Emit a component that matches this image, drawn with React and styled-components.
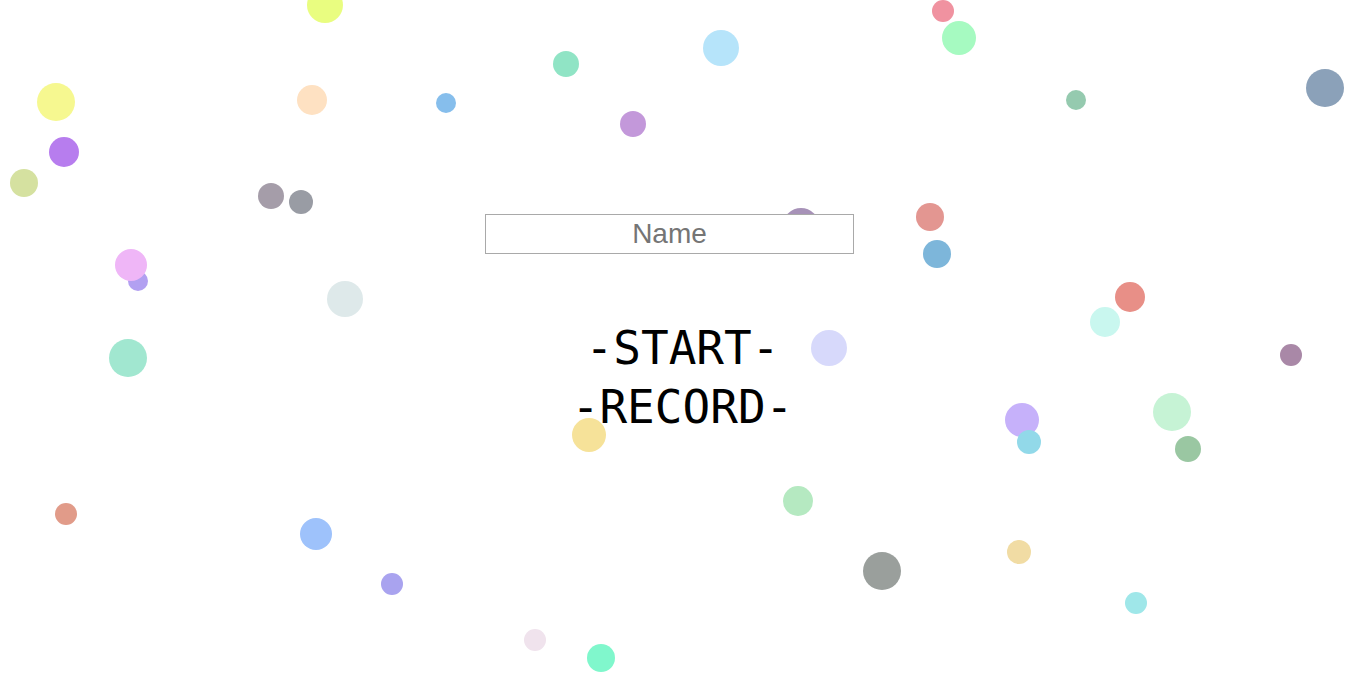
import React from "react";
import styled, { createGlobalStyle } from "styled-components";

const GlobalStyle = createGlobalStyle`
  html, body {
    margin: 0;
    padding: 0;
    background: #ffffff;
  }
`;

// [x, y, diameter, colour] -- centre coordinates
const bubbles = [
  [325, 5, 36, "#e9fd80"],
  [943, 11, 22, "#f092a0"],
  [959, 38, 34, "#a6fac1"],
  [721, 48, 36, "#b6e4fa"],
  [566, 64, 26, "#90e4c5"],
  [1325, 88, 38, "#8ba1b9"],
  [56, 102, 38, "#f6f890"],
  [312, 100, 30, "#fee1c2"],
  [446, 103, 20, "#86beec"],
  [1076, 100, 20, "#95caaf"],
  [633, 124, 26, "#c398da"],
  [64, 152, 30, "#b77dee"],
  [24, 183, 28, "#d5e1a0"],
  [271, 196, 26, "#a59da9"],
  [301, 202, 24, "#999ca4"],
  [801, 226, 36, "#a792b8"],
  [930, 217, 28, "#e39691"],
  [937, 254, 28, "#7db6da"],
  [138, 281, 20, "#b2a0f1"],
  [131, 265, 32, "#efb6f7"],
  [345, 299, 36, "#dee9ea"],
  [1105, 322, 30, "#c9f7ef"],
  [1130, 297, 30, "#e88f87"],
  [128, 358, 38, "#a1e7d0"],
  [829, 348, 36, "#d7d9fb"],
  [1291, 355, 22, "#a988a7"],
  [1022, 420, 34, "#c6b1fa"],
  [1029, 442, 24, "#92d9e9"],
  [1172, 412, 38, "#c6f3d5"],
  [1188, 449, 26, "#9ac7a2"],
  [589, 435, 34, "#f6e299"],
  [798, 501, 30, "#b5e9c1"],
  [66, 514, 22, "#e19b89"],
  [316, 534, 32, "#9ec2fb"],
  [882, 571, 38, "#9a9f9c"],
  [1019, 552, 24, "#f1dca4"],
  [392, 584, 22, "#a9a3ef"],
  [1136, 603, 22, "#9fe7e9"],
  [535, 640, 22, "#f0e3ed"],
  [601, 658, 28, "#80f7cc"],
];

const App = () => {
  return (
    <Page>
      <GlobalStyle />
      <Field>
        {bubbles.map(([x, y, d, c], i) => (
          <Bubble key={i} $x={x} $y={y} $d={d} $color={c} />
        ))}
      </Field>
      <Menu>
        <NameInput type="text" placeholder="Name" />
        <MenuList>
          <MenuItem>-START-</MenuItem>
          <MenuItem>-RECORD-</MenuItem>
        </MenuList>
      </Menu>
    </Page>
  );
};

export default App;

const Page = styled.div`
  position: relative;
  width: 100vw;
  height: 100vh;
  overflow: hidden;
  background: #ffffff;
`;

const Field = styled.div`
  position: absolute;
  inset: 0;
  z-index: 0;
`;

const Bubble = styled.span`
  position: absolute;
  left: ${(p) => p.$x - p.$d / 2}px;
  top: ${(p) => p.$y - p.$d / 2}px;
  width: ${(p) => p.$d}px;
  height: ${(p) => p.$d}px;
  border-radius: 50%;
  background: ${(p) => p.$color};
`;

const Menu = styled.div`
  position: relative;
  z-index: 1;
  display: flex;
  flex-direction: column;
  align-items: center;
  padding-top: 214px;
`;

const NameInput = styled.input`
  box-sizing: border-box;
  width: 369px;
  height: 40px;
  margin: 0 26px 0 0;
  padding: 0 4px;
  border: 1px solid #a9a9a9;
  background: #ffffff;
  font-family: "Liberation Sans", Arial, sans-serif;
  font-size: 28px;
  text-align: center;
  color: #333;
  outline: none;

  &::placeholder {
    color: #757575;
  }
`;

const MenuList = styled.div`
  display: flex;
  flex-direction: column;
  align-items: center;
  margin-top: 65px;
`;

const MenuItem = styled.div`
  font-family: "DejaVu Sans Mono", "Liberation Mono", monospace;
  font-size: 46px;
  line-height: 59px;
  color: #000;
  cursor: pointer;
`;
